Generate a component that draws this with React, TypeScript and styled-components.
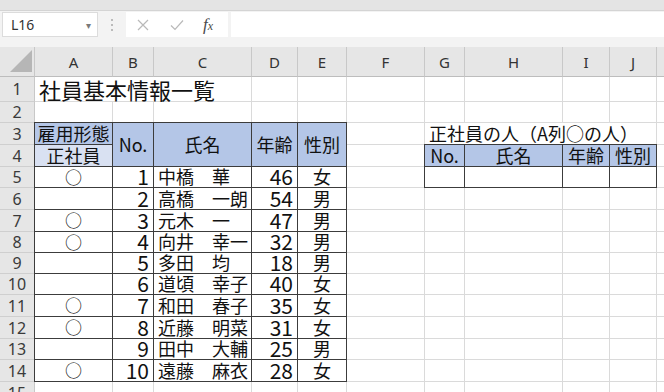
import styled, { createGlobalStyle } from "styled-components"

const GlobalStyle = createGlobalStyle`
  html, body {
    margin: 0;
    padding: 0;
    background: #ffffff;
  }
  body {
    font-family: "Noto Sans CJK JP", "Noto Sans", sans-serif;
  }
`

const BLUE = "#b4c6e7"
const PALE_BLUE = "#d9e1f2"
const GRID_LINE = "#dadada"
const DARK_LINE = "#3c3c3c"

// row header + columns A..K (K runs off the right edge)
const COLUMNS = ["A", "B", "C", "D", "E", "F", "G", "H", "I", "J", "K"]
const COLUMN_WIDTHS = [35, 78, 41, 98, 46, 49, 78, 40, 98, 47, 47, 78]
const ROW_HEIGHTS = [25, 21, 22, 22, 21, 22, 22, 21, 21, 21, 22, 22, 21, 22, 22]

type Align = "left" | "center" | "right"

interface CellSpec {
  text?: string
  span?: number
  rowSpan?: number
  box?: boolean
  bg?: string
  align?: Align
  size?: number
  bottom?: boolean
}

const blank = (n: number): CellSpec[] => Array.from({ length: n }, () => ({}))

const head = (text: string, extra: Partial<CellSpec> = {}): CellSpec => ({
  text,
  box: true,
  bg: BLUE,
  align: "center",
  ...extra,
})

const staff = [
  { regular: true, name: "中橋　華", age: 46, sex: "女" },
  { regular: false, name: "高橋　一朗", age: 54, sex: "男" },
  { regular: true, name: "元木　一", age: 47, sex: "男" },
  { regular: true, name: "向井　幸一", age: 32, sex: "男" },
  { regular: false, name: "多田　均", age: 18, sex: "男" },
  { regular: false, name: "道頃　幸子", age: 40, sex: "女" },
  { regular: true, name: "和田　春子", age: 35, sex: "女" },
  { regular: true, name: "近藤　明菜", age: 31, sex: "女" },
  { regular: false, name: "田中　大輔", age: 25, sex: "男" },
  { regular: true, name: "遠藤　麻衣", age: 28, sex: "女" },
]

const staffRow = (s: (typeof staff)[number], i: number): CellSpec[] => [
  { text: s.regular ? "○" : "", box: true, align: "center", size: 17 },
  { text: String(i + 1), box: true, align: "right", size: 21 },
  { text: s.name, box: true, align: "left" },
  { text: String(s.age), box: true, align: "right", size: 21 },
  { text: s.sex, box: true, align: "center" },
]

const sheet: CellSpec[][] = [
  [{ text: "社員基本情報一覧", span: 3, size: 22, bottom: true }, ...blank(8)],
  blank(11),
  [
    head("雇用形態"),
    head("No.", { rowSpan: 2 }),
    head("氏名", { rowSpan: 2 }),
    head("年齢", { rowSpan: 2 }),
    head("性別", { rowSpan: 2 }),
    {},
    { text: "正社員の人（A列○の人）", span: 4, align: "left" },
    {},
  ],
  [
    head("正社員", { bg: PALE_BLUE }),
    {},
    head("No."),
    head("氏名"),
    head("年齢"),
    head("性別"),
    {},
  ],
  [
    ...staffRow(staff[0], 0),
    {},
    { box: true },
    { box: true },
    { box: true },
    { box: true },
    {},
  ],
  ...staff.slice(1).map((s, i) => [...staffRow(s, i + 1), ...blank(6)]),
  blank(11),
]

const App: React.FC = () => {
  return (
    <>
      <GlobalStyle />
      <Window>
        <TopStrip />
        <FormulaBar>
          <NameBox>
            <span>L16</span>
            <Caret>▾</Caret>
          </NameBox>
          <Grip>
            <svg width="4" height="14" viewBox="0 0 4 14">
              <circle cx="2" cy="2" r="1" fill="#a8a8a8" />
              <circle cx="2" cy="7" r="1" fill="#a8a8a8" />
              <circle cx="2" cy="12" r="1" fill="#a8a8a8" />
            </svg>
          </Grip>
          <ActionBox>
            <svg width="12" height="12" viewBox="0 0 12 12">
              <path d="M1 1 L11 11 M11 1 L1 11" stroke="#b9b9b9" strokeWidth="1.2" fill="none" />
            </svg>
            <svg width="14" height="12" viewBox="0 0 14 12">
              <path d="M1 6.5 L5 10.5 L13 1.5" stroke="#b9b9b9" strokeWidth="1.2" fill="none" />
            </svg>
            <Fx>
              f<small>x</small>
            </Fx>
          </ActionBox>
          <FormulaInput />
        </FormulaBar>

        <Sheet>
          <Corner>
            <svg width="35" height="29" viewBox="0 0 35 29">
              <polygon points="10,25 32,25 32,3" fill="#b6b6b6" />
            </svg>
          </Corner>
          {COLUMNS.map(c => (
            <ColHeader key={c}>{c}</ColHeader>
          ))}

          {sheet.map((row, r) => [
            <RowHeader key={`h${r}`}>{r + 1}</RowHeader>,
            ...row.map((cell, c) => (
              <Cell
                key={`${r}-${c}`}
                $span={cell.span ?? 1}
                $rowSpan={cell.rowSpan ?? 1}
                $box={!!cell.box}
                $bg={cell.bg}
                $align={cell.align ?? "left"}
                $size={cell.size ?? 18}
                $bottom={!!cell.bottom}
              >
                {cell.text}
              </Cell>
            )),
          ])}
        </Sheet>
      </Window>
    </>
  )
}

export default App

const Window = styled.div`
  width: 664px;
  height: 392px;
  overflow: hidden;
  display: flex;
  flex-direction: column;
  background: #f3f3f3;
`
const TopStrip = styled.div`
  flex: none;
  height: 10px;
  background: #e4e4e4;
  border-bottom: 1px solid #d4d4d4;
`
const FormulaBar = styled.div`
  flex: none;
  height: 25px;
  padding: 1px 0 10px 2px;
  display: flex;
  align-items: stretch;
  background: #f3f3f3;
`
const NameBox = styled.div`
  width: 96px;
  box-sizing: border-box;
  display: flex;
  align-items: center;
  justify-content: space-between;
  padding: 0 6px 0 8px;
  background: #ffffff;
  border: 1px solid #dcdcdc;
  font-family: "Noto Sans", "Liberation Sans", sans-serif;
  font-size: 14px;
  color: #333;
`
const Caret = styled.span`
  font-size: 10px;
  color: #7a7a7a;
`
const Grip = styled.div`
  width: 28px;
  display: flex;
  align-items: center;
  justify-content: center;
`
const ActionBox = styled.div`
  width: 102px;
  display: grid;
  grid-template-columns: repeat(3, 34px);
  align-items: center;
  justify-items: center;
  background: #ffffff;
`
const Fx = styled.span`
  font-family: "Liberation Serif", "DejaVu Serif", serif;
  font-style: italic;
  font-size: 17px;
  color: #4a4a4a;
  margin-left: -6px;
  small {
    font-size: 12px;
  }
`
const FormulaInput = styled.div`
  flex: 1;
  margin-left: 3px;
  background: #ffffff;
`
const Sheet = styled.div`
  flex: 1;
  min-width: 0;
  overflow: hidden;
  display: grid;
  grid-template-columns: ${COLUMN_WIDTHS.map(w => `${w}px`).join(" ")};
  grid-template-rows: 30px ${ROW_HEIGHTS.map(h => `${h}px`).join(" ")};
  background: #ffffff;
`
const Corner = styled.div`
  background: #e6e6e6;
  border-right: 1px solid #c8c8c8;
  border-bottom: 1px solid #bdbdbd;
  svg {
    display: block;
  }
`
const ColHeader = styled.div`
  box-sizing: border-box;
  display: flex;
  align-items: center;
  justify-content: center;
  background: #e6e6e6;
  border-right: 1px solid #c8c8c8;
  border-bottom: 1px solid #bdbdbd;
  font-family: "Noto Sans", "Liberation Sans", sans-serif;
  font-size: 15px;
  color: #333;
`
const RowHeader = styled.div`
  box-sizing: border-box;
  display: flex;
  align-items: center;
  justify-content: center;
  background: #e6e6e6;
  border-right: 1px solid #c8c8c8;
  border-bottom: 1px solid #cfcfcf;
  font-family: "Noto Sans", "Liberation Sans", sans-serif;
  font-size: 16px;
  color: #3a3a3a;
`
const justify = { left: "flex-start", center: "center", right: "flex-end" }

const Cell = styled.div<{
  $span: number
  $rowSpan: number
  $box: boolean
  $bg?: string
  $align: Align
  $size: number
  $bottom: boolean
}>`
  box-sizing: border-box;
  grid-column: span ${p => p.$span};
  grid-row: span ${p => p.$rowSpan};
  display: flex;
  align-items: ${p => (p.$bottom ? "flex-end" : "center")};
  justify-content: ${p => justify[p.$align]};
  padding: 0 4px;
  min-width: 0;
  background: ${p => p.$bg ?? "#ffffff"};
  border-right: 1px solid ${GRID_LINE};
  border-bottom: 1px solid ${GRID_LINE};
  font-size: ${p => p.$size}px;
  line-height: 1.1;
  color: #111;
  white-space: nowrap;
  ${p =>
    p.$box &&
    `
    position: relative;
    z-index: 1;
    margin: -1px 0 0 -1px;
    border: 1px solid ${DARK_LINE};
  `}
`
